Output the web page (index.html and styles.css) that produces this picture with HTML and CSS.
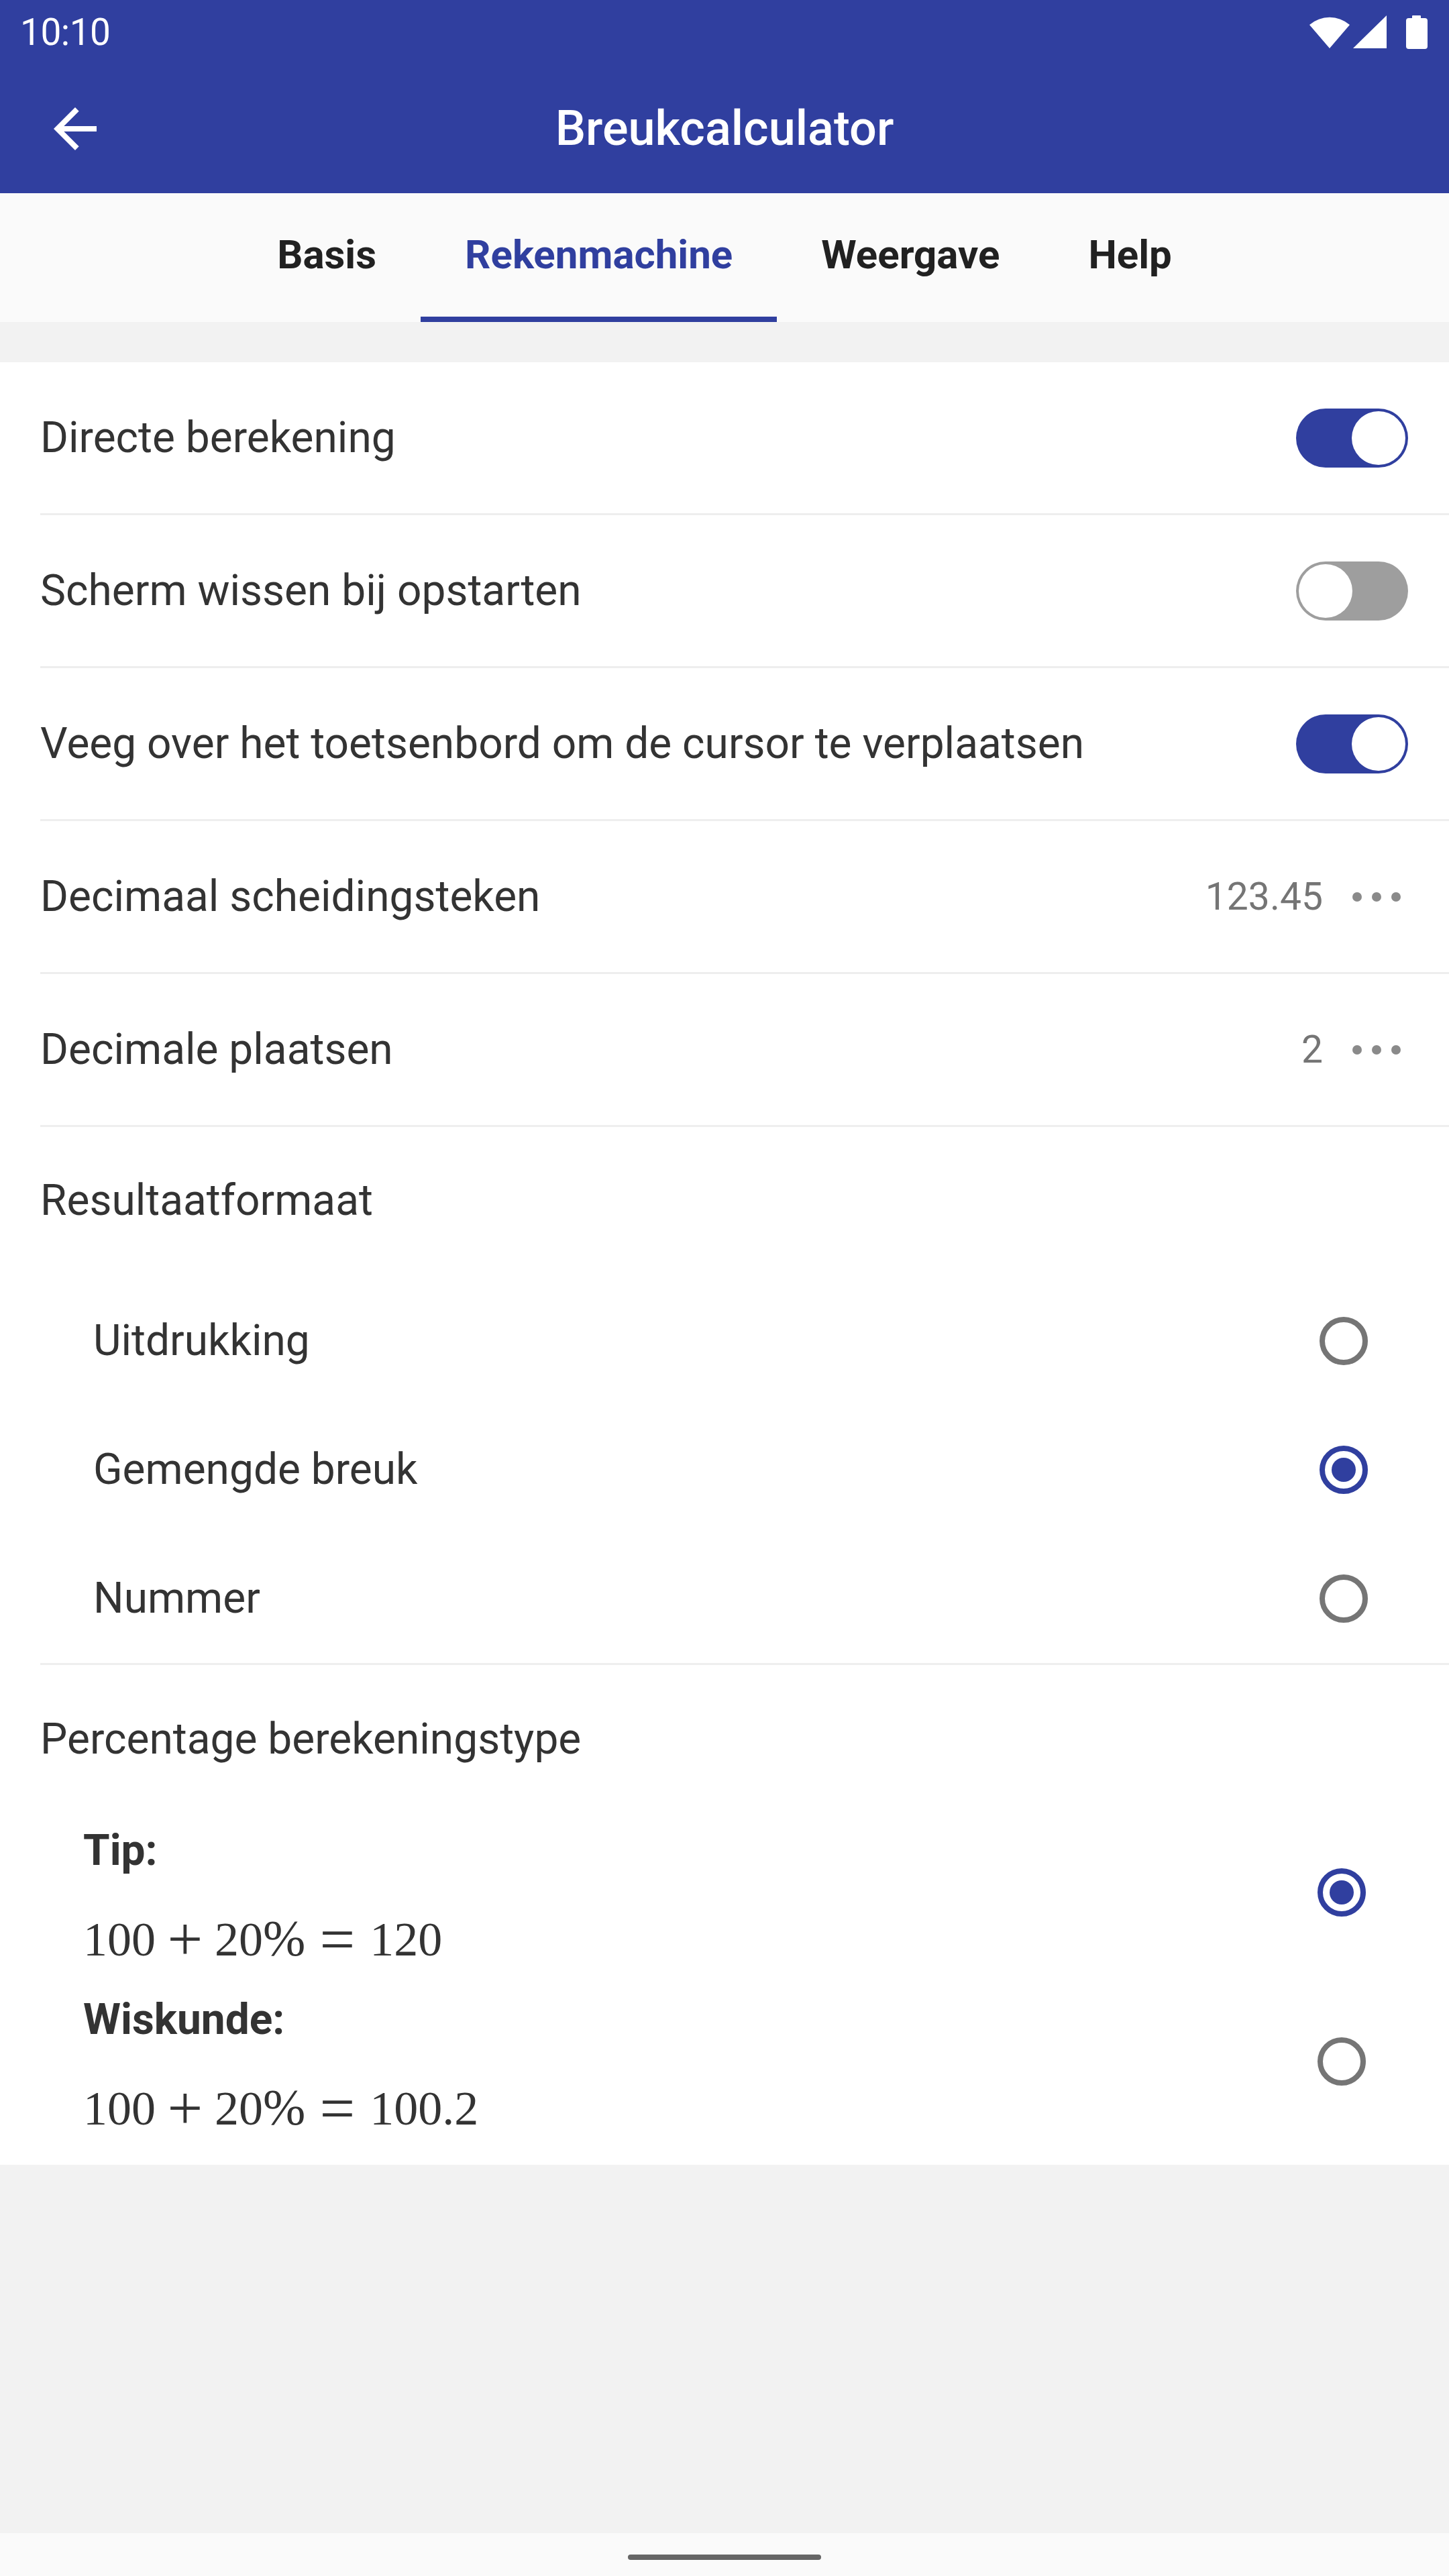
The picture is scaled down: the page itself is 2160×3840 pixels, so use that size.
FILE: index.html
```html
<!DOCTYPE html>
<html lang="nl">
<head>
<meta charset="utf-8">
<title>Breukcalculator</title>
<link rel="stylesheet" href="styles.css">
</head>
<body>
<div class="screen">
  <header class="appbar">
    <div class="statusbar">
      <span class="time">10:10</span>
      <div class="status-icons">
        <svg class="ic-wifi" width="60" height="50" viewBox="0 0 60 50"><path d="M30 49 L0 14 A46 46 0 0 1 60 14 Z" fill="#fff"/></svg>
        <svg class="ic-signal" width="50" height="50" viewBox="0 0 50 50"><path d="M0 49 L50 0 L50 49 Z" fill="#fff"/></svg>
        <svg class="ic-battery" width="32" height="50" viewBox="0 0 32 50"><rect x="9" y="0" width="13" height="6" rx="1" fill="#fff"/><rect x="0" y="4" width="32" height="46" rx="4" fill="#fff"/></svg>
      </div>
    </div>
    <div class="toolbar">
      <div class="nav-icon">
        <svg width="96" height="96" viewBox="0 0 24 24"><path d="M20 11H7.83l5.59-5.59L12 4l-8 8 8 8 1.41-1.41L7.83 13H20v-2z" fill="#fff"/></svg>
      </div>
      <h1 class="title">Breukcalculator</h1>
      <div></div>
    </div>
  </header>

  <nav class="tabs">
    <div class="tab">Basis</div>
    <div class="tab active">Rekenmachine</div>
    <div class="tab">Weergave</div>
    <div class="tab">Help</div>
  </nav>

  <main class="content">
    <section class="card">
      <div class="row">
        <span class="label">Directe berekening</span>
        <span class="switch on"><span class="thumb"></span></span>
      </div>
      <div class="row">
        <span class="label">Scherm wissen bij opstarten</span>
        <span class="switch off"><span class="thumb"></span></span>
      </div>
      <div class="row">
        <span class="label">Veeg over het toetsenbord om de cursor te verplaatsen</span>
        <span class="switch on"><span class="thumb"></span></span>
      </div>
      <div class="row row-value">
        <span class="label">Decimaal scheidingsteken</span>
        <span class="value-wrap"><span class="value">123.45</span><span class="dots"><i></i><i></i><i></i></span></span>
      </div>
      <div class="row row-value">
        <span class="label">Decimale plaatsen</span>
        <span class="value-wrap"><span class="value">2</span><span class="dots"><i></i><i></i><i></i></span></span>
      </div>

      <div class="group">
        <div class="group-title">Resultaatformaat</div>
        <div class="radio-row">
          <span class="label">Uitdrukking</span>
          <span class="radio"></span>
        </div>
        <div class="radio-row">
          <span class="label">Gemengde breuk</span>
          <span class="radio checked"></span>
        </div>
        <div class="radio-row">
          <span class="label">Nummer</span>
          <span class="radio"></span>
        </div>
      </div>

      <div class="group group-last">
        <div class="group-title group-title-pct">Percentage berekeningstype</div>
        <div class="pct-option">
          <div class="pct-text">
            <div class="pct-label">Tip:</div>
            <div class="formula"><span>100</span><span class="bin">+</span><span>20<span class="pct">%</span></span><span class="rel">=</span><span>120</span></div>
          </div>
          <span class="radio checked"></span>
        </div>
        <div class="pct-option">
          <div class="pct-text">
            <div class="pct-label">Wiskunde:</div>
            <div class="formula"><span>100</span><span class="bin">+</span><span>20<span class="pct">%</span></span><span class="rel">=</span><span>100.2</span></div>
          </div>
          <span class="radio"></span>
        </div>
      </div>
    </section>
  </main>

  <div class="navbar"><div class="handle"></div></div>
</div>
</body>
</html>
```

FILE: styles.css
```css
* { box-sizing: border-box; }

html, body {
  margin: 0;
  padding: 0;
}

body {
  font-family: Roboto, "Liberation Sans", sans-serif;
  color: #333333;
  background: #f2f2f2;
}

.screen {
  width: 2160px;
  height: 3840px;
  display: flex;
  flex-direction: column;
  background: #f2f2f2;
}

/* ---------- app bar ---------- */
.appbar {
  background: #303f9f;
  color: #ffffff;
}

.statusbar {
  height: 96px;
  display: flex;
  align-items: center;
  justify-content: space-between;
  padding: 0 32px 0 30px;
}

.time {
  font-size: 55px;
  font-weight: 400;
  line-height: 1;
  letter-spacing: -0.5px;
}

.status-icons {
  display: flex;
  align-items: flex-end;
  height: 50px;
}

.ic-wifi { margin-right: 5px; }
.ic-signal { margin-right: 29px; }

.toolbar {
  height: 192px;
  display: grid;
  grid-template-columns: 160px 1fr 160px;
  align-items: center;
}

.nav-icon {
  padding-left: 64px;
  display: flex;
  align-items: center;
}

.nav-icon svg { display: block; }

.title {
  margin: 0;
  text-align: center;
  font-size: 72px;
  font-weight: 500;
  line-height: 1;
  color: #ffffff;
}

/* ---------- tabs ---------- */
.tabs {
  height: 192px;
  background: #fafafa;
  display: flex;
  justify-content: center;
}

.tab {
  position: relative;
  height: 192px;
  padding: 0 66px 10px;
  display: flex;
  align-items: center;
  font-size: 60px;
  font-weight: 700;
  color: #212121;
}

.tab.active { color: #303f9f; }

.tab.active::after {
  content: "";
  position: absolute;
  left: 0;
  right: 0;
  bottom: 0;
  height: 8px;
  background: #303f9f;
}

/* ---------- content ---------- */
.content {
  flex: 1;
  padding-top: 60px;
  background: #f2f2f2;
}

.card {
  background: #ffffff;
  padding-bottom: 28px;
}

.label {
  font-size: 64px;
  line-height: 76px;
  color: #333333;
}

.row {
  height: 228px;
  margin-left: 60px;
  padding-right: 61px;
  border-bottom: 3px solid #eeeeee;
  display: flex;
  align-items: center;
  justify-content: space-between;
}

.row-value { padding-right: 72px; }

/* switch */
.switch {
  width: 167px;
  height: 88px;
  border-radius: 44px;
  padding: 4px;
  display: flex;
  align-items: center;
}

.switch.on {
  background: #303f9f;
  justify-content: flex-end;
}

.switch.off {
  background: #9e9e9e;
  justify-content: flex-start;
}

.thumb {
  width: 80px;
  height: 80px;
  border-radius: 50%;
  background: #ffffff;
}

/* value + dots */
.value-wrap {
  display: flex;
  align-items: center;
}

.value {
  font-size: 57px;
  color: #757575;
  line-height: 76px;
  margin-right: 44px;
}

.dots {
  display: flex;
  gap: 15px;
}

.dots i {
  display: block;
  width: 14px;
  height: 14px;
  border-radius: 50%;
  background: #8a8a8a;
}

/* groups */
.group {
  margin-left: 60px;
  border-bottom: 3px solid #eeeeee;
}

.group-last { border-bottom: none; }

.group-title {
  height: 223px;
  padding-top: 72px;
  font-size: 64px;
  line-height: 76px;
  color: #333333;
}

.group-title-pct {
  height: 213px;
  padding-top: 73px;
}

.radio-row {
  height: 192px;
  padding-left: 79px;
  padding-right: 121px;
  display: flex;
  align-items: center;
  justify-content: space-between;
}

.radio {
  width: 72px;
  height: 72px;
  border-radius: 50%;
  border: 8px solid #757575;
  display: flex;
  align-items: center;
  justify-content: center;
  flex-shrink: 0;
}

.radio.checked { border-color: #303f9f; }

.radio.checked::after {
  content: "";
  width: 36px;
  height: 36px;
  border-radius: 50%;
  background: #303f9f;
}

/* percentage options */
.pct-option {
  height: 252px;
  padding-left: 64px;
  padding-right: 124px;
  display: flex;
  align-items: center;
  justify-content: space-between;
}

.pct-text { padding-top: 23px; }

.pct-label {
  font-size: 64px;
  font-weight: 700;
  line-height: 76px;
  color: #333333;
}

.formula {
  margin-top: 37px;
  height: 110px;
  font-family: "Liberation Serif", "DejaVu Serif", serif;
  font-size: 72px;
  line-height: 110px;
  color: #333333;
  white-space: nowrap;
}

.formula .bin,
.formula .rel {
  display: inline-block;
  width: 56px;
  text-align: center;
  transform: scale(1.3);
}

.formula .bin { margin: 0 16px; }
.formula .rel { margin: 0 20px; }

.formula .pct { font-size: 76px; line-height: 110px; }

/* ---------- nav bar ---------- */
.navbar {
  height: 64px;
  background: #fafafa;
  display: flex;
  justify-content: center;
  padding-top: 32px;
}

.handle {
  width: 288px;
  height: 8px;
  border-radius: 4px;
  background: #666666;
}
```
